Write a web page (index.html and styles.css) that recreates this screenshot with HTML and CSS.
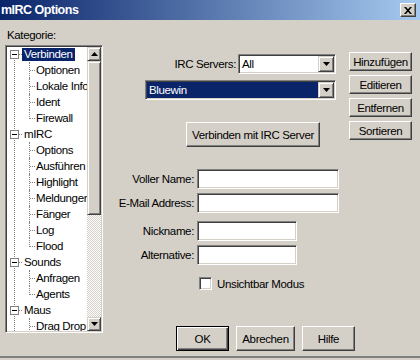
FILE: index.html
```html
<!DOCTYPE html>
<html lang="de">
<head>
  <meta charset="UTF-8" />
  <title>mIRC Options</title>
  <link rel="stylesheet" href="styles.css">
</head>
<body>
  <div class="window">
    <div class="titlebar">
      <span class="title">mIRC Options</span>
      <span class="closeBtn">
        <svg width="8" height="7" viewBox="0 0 8 7"><path d="M0 0h2l2 2.3L6 0h2L5 3.5 8 7H6L4 4.7 2 7H0l3-3.5z"/></svg>
      </span>
    </div>

    <div class="client">
      <!-- category tree -->
      <div class="sidebar">
        <div class="caption">Kategorie:</div>
        <div class="tree">
          <div class="treeList">
            <div class="row root"><span class="expander"></span><span class="hline"></span><span class="lbl sel">Verbinden</span></div>
            <div class="row child"><span class="guide"></span><span class="lbl">Optionen</span></div>
            <div class="row child"><span class="guide"></span><span class="lbl">Lokale Info</span></div>
            <div class="row child"><span class="guide"></span><span class="lbl">Ident</span></div>
            <div class="row child last"><span class="guide"></span><span class="lbl">Firewall</span></div>
            <div class="row root"><span class="expander"></span><span class="hline"></span><span class="lbl">mIRC</span></div>
            <div class="row child"><span class="guide"></span><span class="lbl">Options</span></div>
            <div class="row child"><span class="guide"></span><span class="lbl">Ausführen</span></div>
            <div class="row child"><span class="guide"></span><span class="lbl">Highlight</span></div>
            <div class="row child"><span class="guide"></span><span class="lbl">Meldungen</span></div>
            <div class="row child"><span class="guide"></span><span class="lbl">Fänger</span></div>
            <div class="row child"><span class="guide"></span><span class="lbl">Log</span></div>
            <div class="row child last"><span class="guide"></span><span class="lbl">Flood</span></div>
            <div class="row root"><span class="expander"></span><span class="hline"></span><span class="lbl">Sounds</span></div>
            <div class="row child"><span class="guide"></span><span class="lbl">Anfragen</span></div>
            <div class="row child last"><span class="guide"></span><span class="lbl">Agents</span></div>
            <div class="row root"><span class="expander"></span><span class="hline"></span><span class="lbl">Maus</span></div>
            <div class="row child"><span class="guide"></span><span class="lbl">Drag Drop</span></div>
          </div>
          <div class="vscroll">
            <div class="sbBtn">
              <svg width="7" height="4" viewBox="0 0 7 4"><path d="M3.5 0L7 4H0z"/></svg>
            </div>
            <div class="sbThumb"></div>
            <div class="sbTrack"></div>
            <div class="sbBtn">
              <svg width="7" height="4" viewBox="0 0 7 4"><path d="M0 0h7L3.5 4z"/></svg>
            </div>
          </div>
        </div>
      </div>

      <!-- settings -->
      <div class="main">
        <div class="topArea">
          <div class="servers">
            <div class="srvRow">
              <span class="fieldLabel">IRC Servers:</span>
              <div class="combo short">
                <span class="comboText">All</span>
                <span class="comboBtn"><svg width="7" height="4" viewBox="0 0 7 4"><path d="M0 0h7L3.5 4z"/></svg></span>
              </div>
            </div>
            <div class="combo wide">
              <span class="comboText selected">Bluewin</span>
              <span class="comboBtn"><svg width="7" height="4" viewBox="0 0 7 4"><path d="M0 0h7L3.5 4z"/></svg></span>
            </div>
            <button class="btn connect">Verbinden mit IRC Server</button>
          </div>
          <div class="sideBtns">
            <button class="btn side">Hinzufügen</button>
            <button class="btn side">Editieren</button>
            <button class="btn side">Entfernen</button>
            <button class="btn side">Sortieren</button>
          </div>
        </div>

        <div class="form">
          <span class="fieldLabel">Voller Name:</span>
          <input class="field long" type="text">
          <span class="fieldLabel">E-Mail Address:</span>
          <input class="field long" type="text">
        </div>
        <div class="form second">
          <span class="fieldLabel">Nickname:</span>
          <input class="field short" type="text">
          <span class="fieldLabel">Alternative:</span>
          <input class="field short" type="text">
        </div>

        <div class="check">
          <span class="checkBox"></span>
          <span>Unsichtbar Modus</span>
        </div>

        <div class="dlgBtns">
          <button class="btn dlg default">OK</button>
          <button class="btn dlg wider">Abrechen</button>
          <button class="btn dlg">Hilfe</button>
        </div>
      </div>
    </div>
    <div class="frameBottom"></div>
  </div>
</body>
</html>
```

FILE: styles.css
```css
/* Classic Windows dialog colours */
:root {
  --face: #d4d0c8;
  --shadow: #808080;
  --dark: #404040;
  --light: #fff;
  --select: #0a246a;
}

body {
  margin: 0;
  background: var(--face);
  font-family: "Liberation Sans", Arial, sans-serif;
  font-size: 11.5px;
  letter-spacing: -0.35px;
  color: #000;
}

.window {
  width: 420px;
  height: 360px;
  overflow: hidden;
  background: var(--face);
}

/* Title bar */
.titlebar {
  height: 20px;
  display: flex;
  align-items: center;
  justify-content: space-between;
  padding: 0 4px 0 1px;
  background: linear-gradient(to right, #0a246a, #a6caf0);
}

.title {
  color: #fff;
  font-weight: bold;
  font-size: 12.5px;
  letter-spacing: -0.5px;
}

.closeBtn {
  width: 16px;
  height: 14px;
  box-sizing: border-box;
  display: flex;
  align-items: center;
  justify-content: center;
  background: var(--face);
  border: 1px solid;
  border-color: var(--light) var(--dark) var(--dark) var(--light);
  box-shadow: inset -1px -1px var(--shadow);
}

.client {
  display: flex;
  height: 336px;
}

.frameBottom {
  height: 2px;
  background: var(--shadow);
}

/* Category tree */
.sidebar {
  margin-left: 5px;
  width: 98px;
}

.caption {
  padding-top: 8px;
  line-height: 14px;
  margin-bottom: 3px;
  padding-left: 2px;
}

.tree {
  height: 288px;
  box-sizing: border-box;
  display: flex;
  background: #fff;
  border: 1px solid;
  border-color: var(--shadow) var(--light) var(--light) var(--shadow);
  box-shadow: inset 1px 1px var(--dark), inset -1px -1px var(--face);
  padding: 1px;
}

.treeList {
  flex: 1;
  overflow: hidden;
  margin-top: -1px;
  background: repeating-linear-gradient(to bottom, #808080 0 1px, transparent 1px 2px) 7px 8px / 1px 100% no-repeat;
}

.row {
  height: 16px;
  display: flex;
  align-items: center;
  white-space: nowrap;
}

.expander {
  flex: none;
  width: 9px;
  height: 9px;
  box-sizing: border-box;
  margin-left: 3px;
  border: 1px solid var(--shadow);
  background: linear-gradient(#000, #000) center / 5px 1px no-repeat, #fff;
}

.hline {
  flex: none;
  width: 3px;
  border-top: 1px dotted var(--shadow);
}

.lbl {
  line-height: 13px;
  padding: 0 1px;
}

.root .lbl {
  padding: 0 2px;
}

.sel {
  background: var(--select);
  color: #fff;
}

.guide {
  flex: none;
  align-self: stretch;
  width: 5px;
  margin-left: 22px;
  border-left: 1px dotted var(--shadow);
  background: repeating-linear-gradient(to right, #808080 0 1px, transparent 1px 2px) 0 8px / 100% 1px no-repeat;
}

.last .guide {
  align-self: flex-start;
  height: 8px;
  background: none;
  border-bottom: 1px dotted var(--shadow);
}

/* Scroll bar */
.vscroll {
  width: 14px;
  display: flex;
  flex-direction: column;
}

.sbBtn {
  height: 14px;
  box-sizing: border-box;
  display: flex;
  align-items: center;
  justify-content: center;
  background: var(--face);
  border: 1px solid;
  border-color: var(--face) var(--dark) var(--dark) var(--face);
  box-shadow: inset 1px 1px var(--light), inset -1px -1px var(--shadow);
}

.sbThumb {
  height: 154px;
  box-sizing: border-box;
  background: var(--face);
  border: 1px solid;
  border-color: var(--face) var(--dark) var(--dark) var(--face);
  box-shadow: inset 1px 1px var(--light), inset -1px -1px var(--shadow);
}

.sbTrack {
  flex: 1;
  background: repeating-conic-gradient(#fff 0 25%, var(--face) 0 50%) 0 0 / 2px 2px;
}

/* Main panel */
.main {
  flex: 1;
  padding-top: 32px;
}

.topArea {
  display: flex;
  align-items: flex-start;
}

.servers {
  margin-left: 42px;
  width: 191px;
  padding-top: 2px;
}

.srvRow {
  display: flex;
  justify-content: flex-end;
  align-items: center;
  gap: 2px;
}

.combo {
  height: 20px;
  box-sizing: border-box;
  display: flex;
  background: #fff;
  border: 1px solid;
  border-color: var(--shadow) var(--light) var(--light) var(--shadow);
  box-shadow: inset 1px 1px var(--dark), inset -1px -1px var(--face);
  padding: 1px;
}

.combo.short {
  width: 98px;
}

.combo.wide {
  margin-top: 6px;
  width: 191px;
}

.comboText {
  flex: 1;
  line-height: 16px;
  padding-left: 2px;
}

.comboText.selected {
  background: var(--select);
  color: #fff;
}

.comboBtn {
  width: 16px;
  box-sizing: border-box;
  display: flex;
  align-items: center;
  justify-content: center;
  background: var(--face);
  border: 1px solid;
  border-color: var(--face) var(--dark) var(--dark) var(--face);
  box-shadow: inset 1px 1px var(--light), inset -1px -1px var(--shadow);
}

/* Push buttons */
.btn {
  box-sizing: border-box;
  padding: 0;
  font: inherit;
  letter-spacing: inherit;
  color: #000;
  background: var(--face);
  border: 1px solid;
  border-color: var(--light) var(--dark) var(--dark) var(--light);
  box-shadow: inset -1px -1px var(--shadow);
}

.connect {
  display: block;
  margin: 22px 0 0 41px;
  width: 134px;
  height: 25px;
}

.sideBtns {
  margin-left: 13px;
  display: flex;
  flex-direction: column;
  gap: 4px;
}

.side {
  width: 63px;
  height: 19px;
}

/* Text fields */
.form {
  margin-top: 22px;
  display: grid;
  grid-template-columns: 91px auto;
  column-gap: 3px;
  row-gap: 4px;
  grid-auto-rows: 20px;
  align-items: center;
}

.form.second {
  margin-top: 8px;
}

.fieldLabel {
  justify-self: end;
  white-space: nowrap;
}

.field {
  height: 20px;
  box-sizing: border-box;
  margin: 0;
  background: #fff;
  border: 1px solid;
  border-color: var(--shadow) var(--light) var(--light) var(--shadow);
  box-shadow: inset 1px 1px var(--dark), inset -1px -1px var(--face);
  outline: none;
}

.field.long {
  width: 142px;
}

.field.short {
  width: 100px;
}

/* Checkbox */
.check {
  margin: 12px 0 0 96px;
  display: flex;
  align-items: center;
  gap: 5px;
}

.checkBox {
  width: 13px;
  height: 13px;
  box-sizing: border-box;
  background: #fff;
  border: 1px solid;
  border-color: var(--shadow) var(--light) var(--light) var(--shadow);
  box-shadow: inset 1px 1px var(--dark), inset -1px -1px var(--face);
}

/* Dialog buttons */
.dlgBtns {
  margin: 36px 0 0 73px;
  display: flex;
  gap: 7px;
}

.dlg {
  width: 53px;
  height: 25px;
}

.dlg.wider {
  width: 59px;
}

.dlg.default {
  border: 1px solid #000;
  box-shadow: inset 1px 1px var(--light), inset -1px -1px var(--dark), inset -2px -2px var(--shadow);
}
```
